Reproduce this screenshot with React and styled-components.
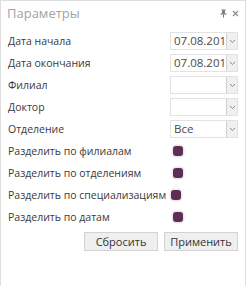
import styled, { createGlobalStyle } from "styled-components";

const GlobalStyle = createGlobalStyle`
  body {
    margin: 0;
    background: #fff;
    font-family: "Open Sans", "Liberation Sans", sans-serif;
  }
`;

const fields = [
  { label: "Дата начала", type: "select", value: "07.08.201" },
  { label: "Дата окончания", type: "select", value: "07.08.201" },
  { label: "Филиал", type: "select", value: "" },
  { label: "Доктор", type: "select", value: "" },
  { label: "Отделение", type: "select", value: "Все" },
  { label: "Разделить по филиалам", type: "check" },
  { label: "Разделить по отделениям", type: "check" },
  { label: "Разделить по специализациям", type: "check" },
  { label: "Разделить по датам", type: "check" },
];

const PinIcon = () => (
  <svg width="7" height="9" viewBox="0 0 7 9">
    <rect x="1.5" y="0.5" width="4" height="1" fill="#666" />
    <rect x="2" y="1.5" width="3" height="3" fill="#777" />
    <rect x="0.5" y="4.5" width="6" height="1" fill="#666" />
    <rect x="3" y="5.5" width="1" height="3" fill="#777" />
  </svg>
);

const CloseIcon = () => (
  <svg width="7" height="7" viewBox="0 0 7 7">
    <path d="M1 1 L6 6 M6 1 L1 6" stroke="#888" strokeWidth="1.1" />
  </svg>
);

const Chevron = () => (
  <svg width="7" height="5" viewBox="0 0 7 5">
    <path d="M1 1 L3.5 3.5 L6 1" stroke="#8a8a8a" strokeWidth="1" fill="none" />
  </svg>
);

const App = () => (
  <>
    <GlobalStyle />
    <Panel>
      <Header>
        <Title>Параметры</Title>
        <Tools>
          <PinIcon />
          <CloseIcon />
        </Tools>
      </Header>
      <Form>
        {fields.map((f) => (
          <Row key={f.label}>
            <Label>{f.label}</Label>
            {f.type === "select" ? (
              <Select>
                <SelectValue>{f.value}</SelectValue>
                <DropButton>
                  <Chevron />
                </DropButton>
              </Select>
            ) : (
              <CheckCell $long={f.label.length > 25}>
                <Check />
              </CheckCell>
            )}
          </Row>
        ))}
      </Form>
      <Footer>
        <Button>Сбросить</Button>
        <Button>Применить</Button>
      </Footer>
    </Panel>
  </>
);

export default App;

const Panel = styled.div`
  width: 246px;
  height: 286px;
  box-sizing: border-box;
  border: 1px solid #dedede;
  border-bottom: none;
  background: #fff;
  padding: 0 7px;
`;

const Header = styled.div`
  height: 24px;
  display: flex;
  align-items: center;
  justify-content: space-between;
`;

const Title = styled.div`
  font-size: 13px;
  color: #a3a3a3;
  margin-left: -1px;
`;

const Tools = styled.div`
  display: flex;
  align-items: center;
  gap: 5px;
  margin-right: -1px;
`;

const Form = styled.div`
  margin-top: 5px;
  display: flex;
  flex-direction: column;
`;

const Row = styled.div`
  display: grid;
  grid-template-columns: minmax(0, 1fr) 68px;
  align-items: center;
  height: 22px;
`;

const Label = styled.div`
  font-size: 10.5px;
  color: #3a3a3a;
  white-space: nowrap;
`;

const Select = styled.div`
  height: 18px;
  box-sizing: border-box;
  border: 1px solid #e2e2e2;
  display: flex;
  align-items: stretch;
  background: #fff;
`;

const SelectValue = styled.div`
  flex: 1;
  overflow: hidden;
  white-space: nowrap;
  font-size: 11.5px;
  line-height: 16px;
  color: #4a4a4a;
  padding-left: 3px;
`;

const DropButton = styled.div`
  width: 10px;
  border-left: 1px solid #d2d2d2;
  background: #f0f0f0;
  display: flex;
  align-items: center;
  justify-content: center;
`;

const CheckCell = styled.div`
  display: flex;
  align-items: center;
  padding-left: ${(p) => (p.$long ? "1px" : "3px")};
`;

const Check = styled.span`
  width: 10px;
  height: 10px;
  border-radius: 3px;
  background: #5c2f55;
  box-shadow: 0 0 0 1.5px #f1e6ee;
`;

const Footer = styled.div`
  display: flex;
  justify-content: flex-end;
  gap: 6px;
  margin-top: 4px;
`;

const Button = styled.button`
  width: 74px;
  height: 19px;
  padding: 0;
  border: 1px solid #d2d2d2;
  background: #efefef;
  font-family: "Open Sans", "Liberation Sans", sans-serif;
  font-size: 11px;
  color: #333;
  line-height: 17px;
`;
